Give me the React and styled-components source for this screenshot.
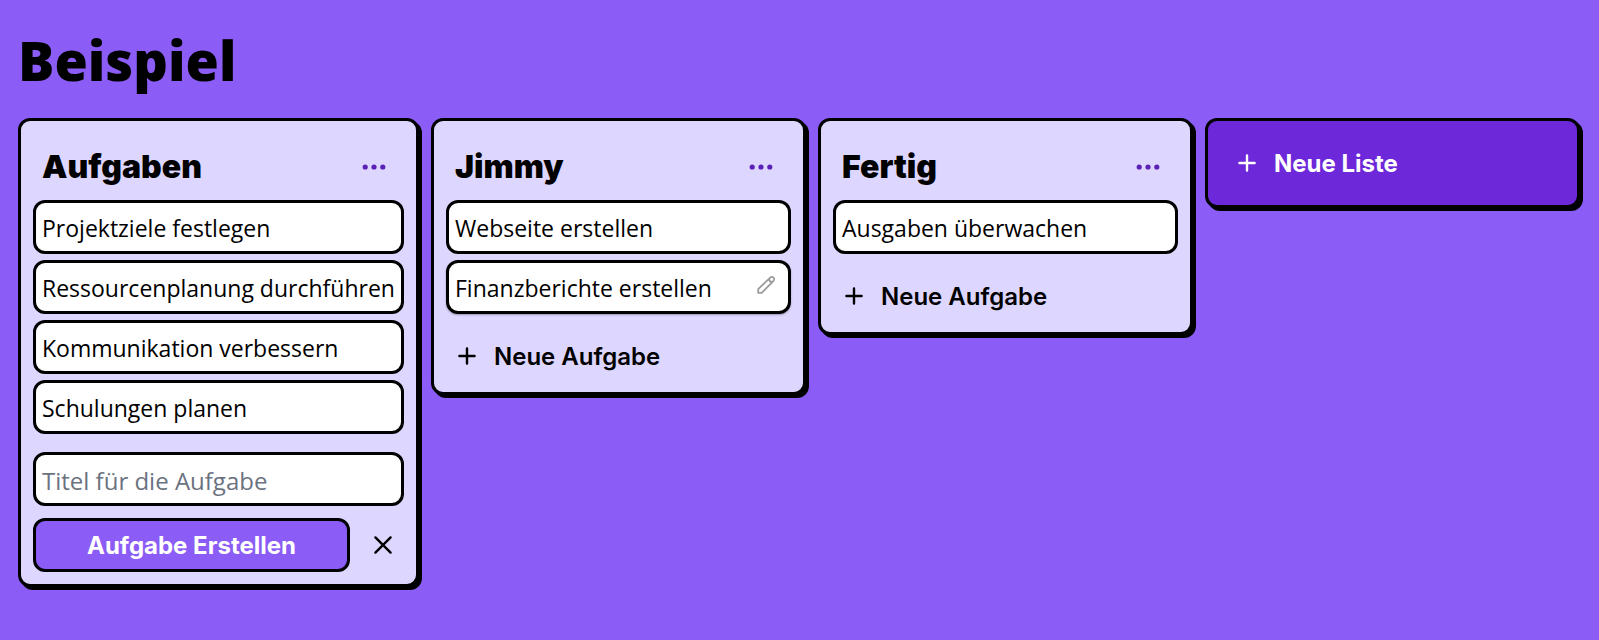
import React from "react";
import styled, { createGlobalStyle } from "styled-components";

const GlobalStyle = createGlobalStyle`
  *, *::before, *::after { box-sizing: border-box; }
  body {
    margin: 0;
    min-height: 100vh;
    background: #8b5cf6;
    color: #000;
    font-family: "Open Sans", "Noto Sans", sans-serif;
  }
  button, input { font: inherit; color: inherit; }
`;

const headingFont = `"Inter", "Noto Sans", sans-serif`;

const Page = styled.main`
  padding: 24px 19px 24px 18px;
`;

const BoardTitle = styled.h1`
  margin: 0 0 22px;
  font-family: "Noto Sans", sans-serif;
  font-weight: 900;
  font-size: 54px;
  line-height: 72px;
`;

const Board = styled.div`
  display: grid;
  grid-template-columns: minmax(401px, 1fr) repeat(3, minmax(300px, 1fr));
  gap: 12px;
  align-items: start;
`;

const List = styled.section`
  display: flex;
  flex-direction: column;
  padding: 12px;
  border: 3px solid #000;
  border-radius: 12px;
  background: #ddd6fe;
  box-shadow: 3px 3px 0 #000;
`;

const ListHeader = styled.header`
  display: flex;
  align-items: center;
  justify-content: space-between;
  height: 67px;
  padding: 0 9px;
`;

const ListTitle = styled.h2`
  margin: 0;
  font-family: ${headingFont};
  font-weight: 900;
  font-size: 32px;
  line-height: 42px;
`;

const IconButton = styled.button`
  display: flex;
  align-items: center;
  justify-content: center;
  flex: none;
  width: 42px;
  height: 42px;
  padding: 0;
  border: 0;
  background: none;
  color: ${(p) => p.$color || "#000"};
  cursor: pointer;
`;

const Tasks = styled.ul`
  display: grid;
  gap: 6px;
  margin: 0;
  padding: 0;
  list-style: none;
`;

const Task = styled.li`
  display: flex;
  justify-content: space-between;
  align-items: flex-start;
  height: 54px;
  padding: 8px 6px 0;
  border: 3px solid #000;
  border-radius: 12px;
  background: #fff;
  box-shadow: ${(p) => (p.$raised ? "0 1px 2px rgba(0, 0, 0, 0.3)" : "none")};
  font-size: 23px;
  line-height: 34px;
  white-space: nowrap;
`;

const EditButton = styled(IconButton)`
  width: 24px;
  height: 28px;
  margin-right: 4px;
`;

const TaskForm = styled.form`
  display: grid;
  grid-template-columns: 1fr 42px;
  gap: 12px;
  align-items: center;
  margin-top: 18px;
`;

const TaskInput = styled.input`
  grid-column: 1 / -1;
  width: 100%;
  height: 54px;
  padding: 2px 6px 0;
  border: 3px solid #000;
  border-radius: 12px;
  background: #fff;
  font-size: 24px;
  &::placeholder { color: #6b7280; opacity: 1; }
`;

const SubmitButton = styled.button`
  height: 54px;
  padding: 0 6px;
  border: 3px solid #000;
  border-radius: 12px;
  background: #8b5cf6;
  color: #fff;
  font-family: ${headingFont};
  font-weight: 700;
  font-size: 24px;
  cursor: pointer;
`;

const AddButton = styled.button`
  display: flex;
  align-items: center;
  gap: 15px;
  height: 48px;
  margin-top: 18px;
  padding: 0 9px;
  border: 0;
  background: none;
  font-family: ${headingFont};
  font-weight: 600;
  font-size: 24px;
  cursor: pointer;
`;

const NewListButton = styled(AddButton)`
  height: 90px;
  margin: 0;
  padding: 0 27px;
  border: 3px solid #000;
  border-radius: 12px;
  background: #6d28d9;
  box-shadow: 3px 3px 0 #000;
  color: #fff;
  font-weight: 700;
`;

const Icon = styled.svg`
  display: block;
  flex: none;
  width: 24px;
  height: 24px;
  fill: none;
  stroke: currentColor;
  stroke-width: 2.4;
  stroke-linecap: round;
  stroke-linejoin: round;
`;

const Plus = () => (
  <Icon viewBox="0 0 24 24" aria-hidden="true">
    <path d="M12 4.4v15.2M4.4 12h15.2" />
  </Icon>
);

const Close = () => (
  <Icon viewBox="0 0 24 24" aria-hidden="true">
    <path d="M4.4 4.4l15.2 15.2M19.6 4.4L4.4 19.6" />
  </Icon>
);

const Dots = () => (
  <Icon viewBox="0 0 24 24" aria-hidden="true">
    <g fill="currentColor" stroke="none">
      <circle cx="3.2" cy="12" r="2.6" />
      <circle cx="12" cy="12" r="2.6" />
      <circle cx="20.8" cy="12" r="2.6" />
    </g>
  </Icon>
);

const Pencil = () => (
  <Icon viewBox="0 0 24 24" aria-hidden="true">
    <path
      strokeWidth="1.8"
      d="M4.2 19.8v-3.6L16.2 4.6a2.3 2.3 0 0 1 3.3 3.3L7.8 19.8zM15 5.8c.2 2 1.4 3.2 3.3 3.3"
    />
  </Icon>
);

const lists = [
  {
    title: "Aufgaben",
    tasks: [
      "Projektziele festlegen",
      "Ressourcenplanung durchführen",
      "Kommunikation verbessern",
      "Schulungen planen",
    ],
    adding: true,
  },
  { title: "Jimmy", tasks: ["Webseite erstellen", "Finanzberichte erstellen"], active: 1 },
  { title: "Fertig", tasks: ["Ausgaben überwachen"] },
];

function NewTaskForm() {
  return (
    <TaskForm onSubmit={(e) => e.preventDefault()}>
      <TaskInput type="text" aria-label="Titel für die Aufgabe" placeholder="Titel für die Aufgabe" />
      <SubmitButton type="submit">Aufgabe Erstellen</SubmitButton>
      <IconButton type="button" aria-label="Abbrechen">
        <Close />
      </IconButton>
    </TaskForm>
  );
}

export default function App() {
  return (
    <Page>
      <GlobalStyle />
      <BoardTitle>Beispiel</BoardTitle>
      <Board>
        {lists.map((list) => (
          <List key={list.title}>
            <ListHeader>
              <ListTitle>{list.title}</ListTitle>
              <IconButton type="button" $color="#5b21b6" aria-label="Listenmenü">
                <Dots />
              </IconButton>
            </ListHeader>
            <Tasks>
              {list.tasks.map((task, i) => (
                <Task key={task} $raised={list.active === i}>
                  {task}
                  {list.active === i && (
                    <EditButton type="button" $color="#9c9c9c" aria-label="Bearbeiten">
                      <Pencil />
                    </EditButton>
                  )}
                </Task>
              ))}
            </Tasks>
            {list.adding ? (
              <NewTaskForm />
            ) : (
              <AddButton type="button">
                <Plus />
                Neue Aufgabe
              </AddButton>
            )}
          </List>
        ))}
        <NewListButton type="button">
          <Plus />
          Neue Liste
        </NewListButton>
      </Board>
    </Page>
  );
}
